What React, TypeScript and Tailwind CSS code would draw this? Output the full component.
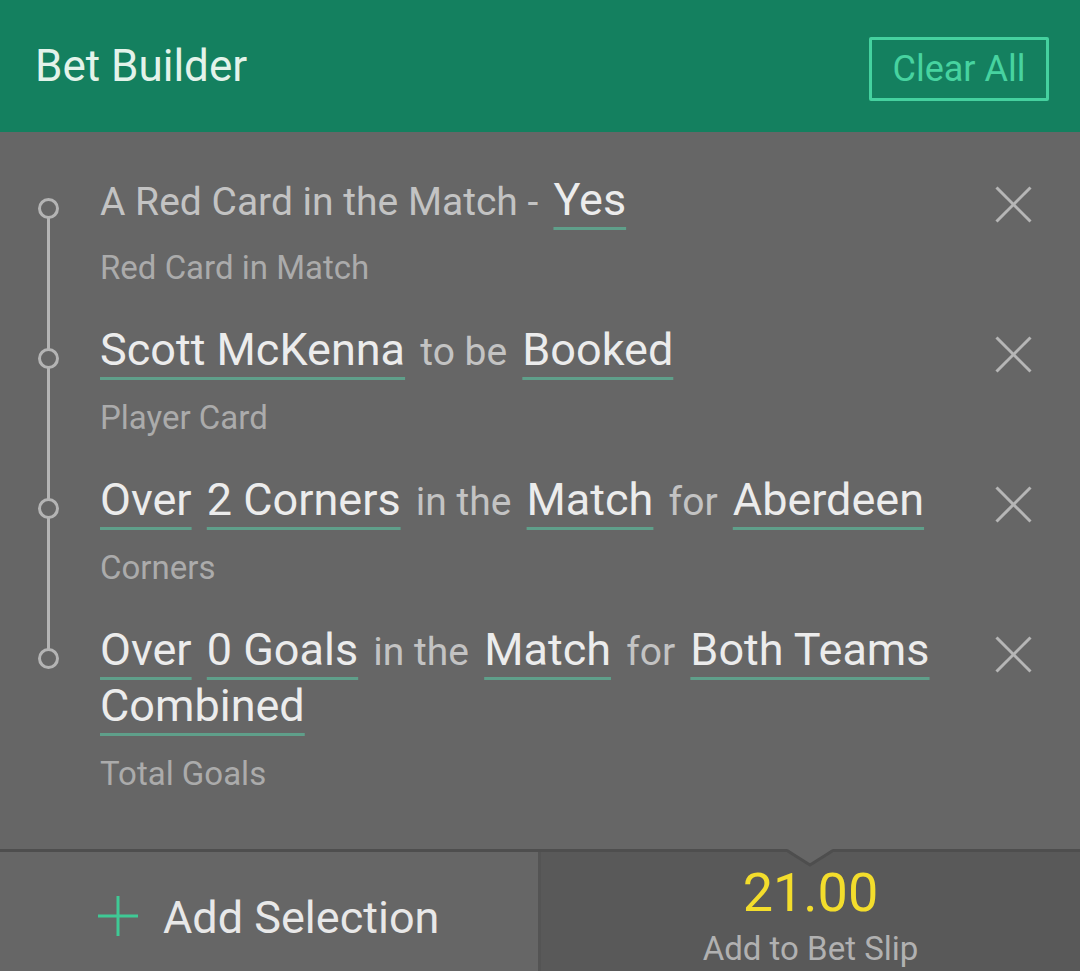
import React from "react";

const U = ({ children }: { children: React.ReactNode }) => (
  <span className="text-[#ececec] text-[45px] leading-none [word-spacing:normal] underline decoration-[#5f9f8a] decoration-[3px] underline-offset-[12px]">
    {children}
  </span>
);

const C = ({ children }: { children: React.ReactNode }) => (
  <span className="text-[#c3c3c3] text-[39px] leading-none [word-spacing:normal]">{children}</span>
);

const XIcon = () => (
  <svg width="37" height="37" viewBox="0 0 37 37" className="block">
    <line x1="1.5" y1="1.5" x2="35.5" y2="35.5" stroke="#b6b6b6" strokeWidth="3" />
    <line x1="35.5" y1="1.5" x2="1.5" y2="35.5" stroke="#b6b6b6" strokeWidth="3" />
  </svg>
);

const Item = ({ title, sub }: { title: React.ReactNode; sub: string }) => (
  <div className="flex">
    <div className="w-[100px] shrink-0">
      <div className="relative mt-[26px] ml-[38px] w-[21px] h-[21px] rounded-full border-[3px] border-[#b4b4b4] bg-[#666666]" />
    </div>
    <div className="flex-1 min-w-0">
      <div className="leading-[56px] text-[45px] [word-spacing:4px]">{title}</div>
      <div className="mt-[20px] text-[33px] leading-[40px] text-[#ababab]">{sub}</div>
    </div>
    <div className="w-[110px] shrink-0 pl-[25px] pt-[14px]">
      <XIcon />
    </div>
  </div>
);

export default function App() {
  return (
    <div className="w-[1080px] h-[971px] overflow-hidden bg-[#666666] font-[Roboto,sans-serif] flex flex-col">
      <div className="h-[132px] shrink-0 bg-[#14805f] flex items-center justify-between pl-[35px] pr-[31px]">
        <span className="text-[44px] leading-none text-[#e3f3ea]">Bet Builder</span>
        <div className="mt-[6px] w-[180px] h-[64px] border-[3px] border-[#45d19f] rounded-[2px] flex items-center justify-center text-[36px] leading-none text-[#47d3a0]">
          Clear All
        </div>
      </div>

      <div className="relative flex-1 pt-[40px] flex flex-col gap-[34px]">
        <div className="absolute left-[47px] top-[76px] w-[3px] h-[450px] bg-[#b4b4b4]" />
        <Item
          title={
            <>
              <C>A Red Card in the Match -</C> <U>Yes</U>
            </>
          }
          sub="Red Card in Match"
        />
        <Item
          title={
            <>
              <U>Scott McKenna</U> <C>to be</C> <U>Booked</U>
            </>
          }
          sub="Player Card"
        />
        <Item
          title={
            <>
              <U>Over</U> <U>2 Corners</U> <C>in the</C> <U>Match</U> <C>for</C> <U>Aberdeen</U>
            </>
          }
          sub="Corners"
        />
        <Item
          title={
            <>
              <U>Over</U> <U>0 Goals</U> <C>in the</C> <U>Match</U> <C>for</C> <U>Both Teams</U>{" "}
              <U>Combined</U>
            </>
          }
          sub="Total Goals"
        />
      </div>

      <div className="relative h-[122px] shrink-0 border-t-[3px] border-[#4e4e4e] flex">
        <div className="w-[538px] shrink-0 bg-[#666666] flex items-start pt-[38px] pl-[98px]">
          <svg width="40" height="40" viewBox="0 0 40 40" className="mt-[6px] shrink-0">
            <line x1="20" y1="0" x2="20" y2="40" stroke="#3fc995" strokeWidth="3" />
            <line x1="0" y1="20" x2="40" y2="20" stroke="#3fc995" strokeWidth="3" />
          </svg>
          <span className="ml-[25px] text-[45px] leading-[56px] text-[#e8e8e8]">Add Selection</span>
        </div>
        <div className="w-[3px] shrink-0 bg-[#545454]" />
        <div className="flex-1 bg-[#595959] flex flex-col items-center pt-[11px]">
          <span className="text-[54px] leading-[60px] text-[#f3dd2c]">21.00</span>
          <span className="mt-[6px] text-[33px] leading-[40px] text-[#b1b1b1]">Add to Bet Slip</span>
        </div>
        <svg
          width="46"
          height="18"
          viewBox="0 0 46 18"
          className="absolute left-[787px] top-[-3px]"
        >
          <polygon points="0,0 46,0 23,16" fill="#666666" />
          <polyline points="0,1.5 23,16 46,1.5" fill="none" stroke="#4e4e4e" strokeWidth="3" />
        </svg>
      </div>
    </div>
  );
}
